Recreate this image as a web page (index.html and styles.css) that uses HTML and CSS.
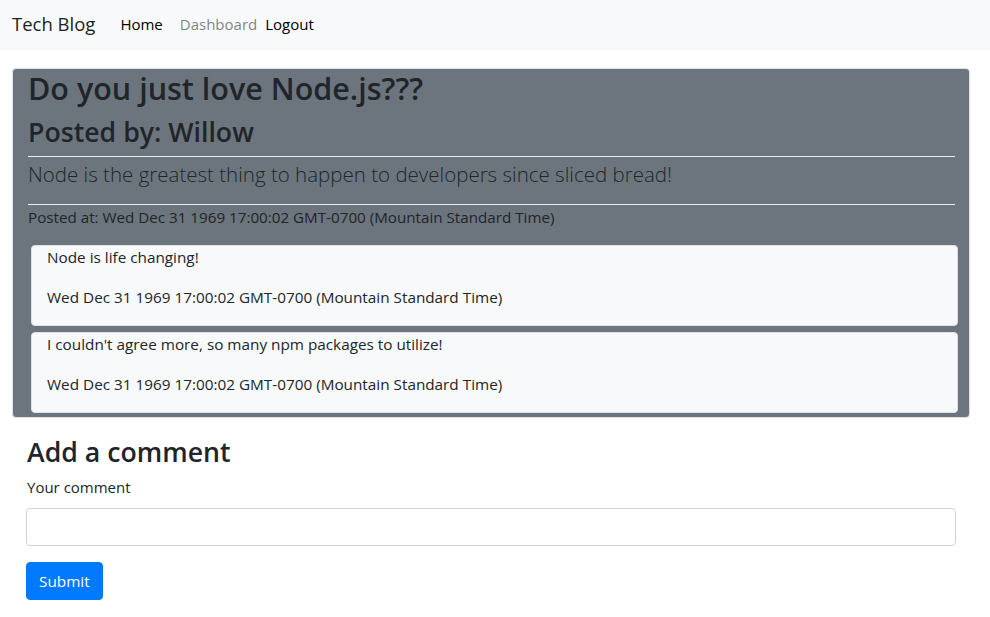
FILE: index.html
```html
<!DOCTYPE html>
<html lang="en">
<head>
<meta charset="utf-8">
<title>Tech Blog</title>
<link rel="stylesheet" href="styles.css">
</head>
<body>
<nav class="navbar">
  <a class="brand" href="#">Tech Blog</a>
  <ul class="nav-links">
    <li class="nav-item"><a class="nav-link" href="#">Home</a></li>
    <li class="nav-item nav-item-muted"><a class="nav-link muted" href="#">Dashboard</a></li>
    <li class="nav-item"><a class="nav-link" href="#">Logout</a></li>
  </ul>
</nav>
<main class="page">
  <section class="post-card">
    <h2 class="post-title">Do you just love Node.js???</h2>
    <h3 class="post-author">Posted by: Willow</h3>
    <hr class="post-rule">
    <p class="post-body">Node is the greatest thing to happen to developers since sliced bread!</p>
    <hr class="post-rule">
    <p class="post-date">Posted at: Wed Dec 31 1969 17:00:02 GMT-0700 (Mountain Standard Time)</p>
    <div class="comment-list">
      <article class="comment-card">
        <p>Node is life changing!</p>
        <p>Wed Dec 31 1969 17:00:02 GMT-0700 (Mountain Standard Time)</p>
      </article>
      <article class="comment-card">
        <p>I couldn't agree more, so many npm packages to utilize!</p>
        <p>Wed Dec 31 1969 17:00:02 GMT-0700 (Mountain Standard Time)</p>
      </article>
    </div>
  </section>
  <section class="comment-form">
    <h2 class="form-title">Add a comment</h2>
    <form class="form">
      <label class="form-label" for="comment">Your comment</label>
      <input class="form-input" id="comment" type="text">
      <button class="btn-primary" type="submit">Submit</button>
    </form>
  </section>
</main>
</body>
</html>
```
FILE: styles.css
```css
* { box-sizing: border-box; }

body {
  margin: 0;
  font-family: "Open Sans", "Noto Sans", sans-serif;
  font-size: 15.3px;
  line-height: 1.5;
  color: #212529;
  background: #fff;
}

a { text-decoration: none; }

.navbar {
  display: flex;
  align-items: center;
  height: 50px;
  padding: 0 0 2px 12px;
  background: #f8f9fa;
}

.brand {
  font-size: 18.5px;
  line-height: 30px;
  color: rgba(0, 0, 0, 0.9);
  margin-right: 25px;
}

.nav-links {
  display: flex;
  list-style: none;
  margin: 0;
  padding: 0;
}

.nav-item { margin-right: 17px; }
.nav-item-muted { margin-right: 8px; }

.nav-link {
  color: #000;
  font-size: 15px;
}

.nav-link.muted { color: rgba(0, 0, 0, 0.5); }

.post-card {
  margin: 18px 20px 0 12px;
  padding: 0 14px 4px 15px;
  background: #6c757d;
  border: 1px solid #dee2e6;
  border-radius: 4px;
}

.post-title {
  margin: 0 0 8px;
  font-size: 30.5px;
  font-weight: 600;
  line-height: 38px;
}

.post-author {
  margin: 0 0 7px;
  font-size: 26.7px;
  font-weight: 600;
  line-height: 34px;
}

.post-rule {
  margin: 0;
  border: 0;
  border-top: 1px solid #e9ecef;
}

.post-body {
  margin: 2px 0 15px;
  font-size: 20.5px;
  font-weight: 300;
  line-height: 30px;
}

.post-date {
  margin: 0 0 16px;
  font-size: 15.2px;
  line-height: 24px;
}

.comment-list {
  display: flex;
  flex-direction: column;
  gap: 6px;
  margin: 0 -3px 0 3px;
}

.comment-card {
  padding: 0 15px;
  background: #f8f9fa;
  border: 1px solid #dee2e6;
  border-radius: 4px;
}

.comment-card p {
  margin: 0 0 16px;
  line-height: 24px;
}

.comment-card p:first-child { margin-top: -1px; }

.comment-form {
  padding: 15px 34px 0 26px;
}

.form-title {
  margin: 0 0 5px 1px;
  font-size: 26.7px;
  font-weight: 600;
  line-height: 38px;
}

.form {
  display: flex;
  flex-direction: column;
  align-items: flex-start;
}

.form-label {
  font-size: 15px;
  line-height: 22px;
  margin: 0 0 10px 1px;
}

.form-input {
  width: 100%;
  height: 38px;
  padding: 6px 12px;
  font: inherit;
  color: #495057;
  border: 1px solid #ced4da;
  border-radius: 4px;
  background: #fff;
  margin-bottom: 16px;
}

.btn-primary {
  height: 38px;
  padding: 0 12px;
  font: inherit;
  font-size: 15.3px;
  color: #fff;
  background: #007bff;
  border: 1px solid #007bff;
  border-radius: 4px;
}
```
